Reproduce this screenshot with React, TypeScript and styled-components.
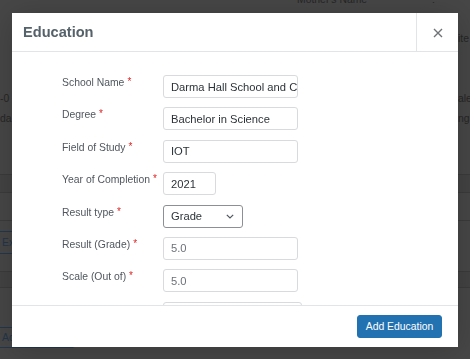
import React from "react";
import styled, { createGlobalStyle } from "styled-components";

const Global = createGlobalStyle`
  html, body { margin: 0; padding: 0; }
  body {
    width: 470px;
    height: 359px;
    overflow: hidden;
    background: #474747;
    font-family: "Liberation Sans", Arial, Helvetica, sans-serif;
  }
  * { box-sizing: border-box; }
`;

/* ---------- dimmed page behind the dialog ---------- */
const Page = styled.div`
  width: 470px;
  height: 359px;
  overflow: hidden;
  display: flex;
  flex-direction: column;
  background: #474747;
  color: #262626;
  font-size: 10.4px;
`;

const BgRow = styled.div<{ $h: number; $line?: boolean; $dark?: boolean; $top?: boolean }>`
  height: ${(p) => p.$h}px;
  flex: none;
  display: flex;
  align-items: ${(p) => (p.$top ? "flex-end" : "center")};
  justify-content: space-between;
  border-bottom: ${(p) => (p.$line ? "1px solid #3b3b3b" : "none")};
  background: ${(p) => (p.$dark ? "#434343" : "transparent")};
`;

const BgText = styled.span<{ $ml?: number; $mr?: number }>`
  margin-left: ${(p) => p.$ml ?? 0}px;
  margin-right: ${(p) => p.$mr ?? 0}px;
  white-space: nowrap;
  line-height: 12px;
`;

const BgEdge = styled.span`
  white-space: nowrap;
  width: 12px;
  overflow: hidden;
  display: block;
`;

const BgButton = styled.span<{ $w: number }>`
  width: ${(p) => p.$w}px;
  height: 100%;
  border: 1px solid #23384c;
  border-left: none;
  border-radius: 0 3px 3px 0;
  color: #22364a;
  display: flex;
  align-items: center;
  padding-left: 2px;
`;

/* ---------- overlay + dialog ---------- */
const Overlay = styled.div`
  position: fixed;
  inset: 0;
  padding: 13px 12px 12px;
`;

const Dialog = styled.div`
  width: 446px;
  height: 334px;
  background: #fff;
  display: flex;
  flex-direction: column;
  box-shadow: 0 3px 30px rgba(0, 0, 0, 0.2);
`;

const Header = styled.div`
  height: 39px;
  flex: none;
  display: flex;
  align-items: stretch;
  border-bottom: 1px solid #e2e4e7;
`;

const Title = styled.h1`
  flex: 1;
  margin: 0;
  padding-left: 11px;
  display: flex;
  align-items: center;
  font-size: 14.6px;
  font-weight: 700;
  color: #55626a;
`;

const CloseButton = styled.button`
  width: 42px;
  border: none;
  border-left: 1px solid #e2e4e7;
  background: transparent;
  padding: 2px 0 0;
  display: flex;
  align-items: center;
  justify-content: center;
  color: #6f7378;
  cursor: pointer;
`;

const Body = styled.div`
  flex: 1;
  overflow: hidden;
  padding: 23px 0 0 50px;
  display: flex;
  flex-direction: column;
  gap: 9.4px;
`;

const Row = styled.div`
  display: grid;
  grid-template-columns: 101px auto;
  align-items: start;
  flex: none;
`;

const Label = styled.label`
  font-size: 10.4px;
  line-height: 14px;
  color: #50575e;
  white-space: nowrap;
`;

const Req = styled.span`
  color: #e02424;
  margin-left: 3px;
  font-size: 10px;
  vertical-align: 1px;
`;

const Field = styled.div<{ $w: number }>`
  width: ${(p) => p.$w}px;
  height: 23px;
  border: 1px solid #d8dadd;
  border-radius: 3px;
  display: flex;
  align-items: center;
  padding-left: 7px;
  font-size: 11.2px;
  white-space: nowrap;
  overflow: hidden;
`;

const Value = styled.span<{ $muted?: boolean }>`
  color: ${(p) => (p.$muted ? "#6c7177" : "#2c3338")};
`;

const Select = styled.div`
  width: 80px;
  height: 23px;
  border: 1px solid #8c8f94;
  border-radius: 3px;
  display: flex;
  align-items: center;
  justify-content: space-between;
  padding: 0 8px 0 7px;
  font-size: 11.2px;
  color: #2c3338;
`;

const Footer = styled.div`
  height: 42px;
  flex: none;
  border-top: 1px solid #e2e4e7;
  display: flex;
  justify-content: flex-end;
  align-items: flex-start;
  padding: 9px 16px 0 0;
`;

const PrimaryButton = styled.button`
  width: 85px;
  height: 23px;
  border: 1px solid #2271b1;
  border-radius: 3px;
  background: #2271b1;
  color: #fff;
  font-family: inherit;
  font-size: 10.4px;
  padding: 0;
  cursor: pointer;
`;

const rows: { label: string; value?: string; w?: number; muted?: boolean; select?: boolean }[] = [
  { label: "School Name", value: "Darma Hall School and College", w: 135 },
  { label: "Degree", value: "Bachelor in Science", w: 135 },
  { label: "Field of Study", value: "IOT", w: 135 },
  { label: "Year of Completion", value: "2021", w: 53 },
  { label: "Result type", value: "Grade", select: true },
  { label: "Result (Grade)", value: "5.0", w: 135, muted: true },
  { label: "Scale (Out of)", value: "5.0", w: 135, muted: true },
  { label: "", value: "", w: 139 },
];

export default function App() {
  return (
    <>
      <Global />
      <Page>
        <BgRow $h={6} $top>
          <BgText $ml={297}>Mother's Name</BgText>
          <BgText $mr={35}>:</BgText>
        </BgRow>
        <BgRow $h={64}>
          <span />
          <BgEdge>ite</BgEdge>
        </BgRow>
        <BgRow $h={18} />
        <BgRow $h={20}>
          <BgEdge>-0</BgEdge>
          <BgEdge>ale</BgEdge>
        </BgRow>
        <BgRow $h={20}>
          <BgEdge>da</BgEdge>
          <BgEdge>ngl</BgEdge>
        </BgRow>
        <BgRow $h={47} $line />
        <BgRow $h={18} $line $dark />
        <BgRow $h={28} $line />
        <BgRow $h={10} />
        <BgRow $h={23}>
          <BgButton $w={60}>Ex</BgButton>
        </BgRow>
        <BgRow $h={18} $line />
        <BgRow $h={16} $line $dark />
        <BgRow $h={39} />
        <BgRow $h={21}>
          <BgButton $w={75}>Ad</BgButton>
        </BgRow>
      </Page>

      <Overlay>
        <Dialog role="dialog" aria-label="Education">
          <Header>
            <Title>Education</Title>
            <CloseButton aria-label="Close">
              <svg width="10" height="10" viewBox="0 0 10 10">
                <path d="M1 1 L9 9 M9 1 L1 9" stroke="currentColor" strokeWidth="1.4" fill="none" />
              </svg>
            </CloseButton>
          </Header>
          <Body>
            {rows.map((r, i) => (
              <Row key={i}>
                <Label>
                  {r.label && (
                    <>
                      {r.label}
                      <Req>*</Req>
                    </>
                  )}
                </Label>
                {r.select ? (
                  <Select>
                    <span>{r.value}</span>
                    <svg width="8" height="5" viewBox="0 0 8 5">
                      <path d="M0.8 0.8 L4 4 L7.2 0.8" stroke="#50575e" strokeWidth="1.2" fill="none" />
                    </svg>
                  </Select>
                ) : (
                  <Field $w={r.w ?? 135}>
                    <Value $muted={r.muted}>{r.value}</Value>
                  </Field>
                )}
              </Row>
            ))}
          </Body>
          <Footer>
            <PrimaryButton>Add Education</PrimaryButton>
          </Footer>
        </Dialog>
      </Overlay>
    </>
  );
}
